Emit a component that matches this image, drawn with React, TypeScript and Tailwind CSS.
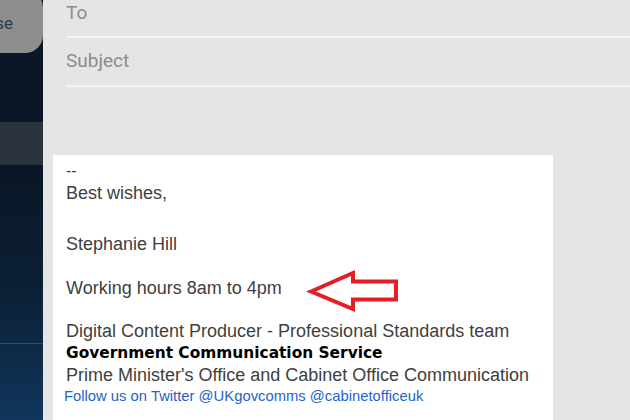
const Arrow = () => (
  <svg width="110" height="60" viewBox="0 0 110 60" className="absolute left-[248px] top-[106px]">
    <polygon
      points="10,30.5 52,12 52,20.5 95,20.5 95,38.5 52,38.5 52,48"
      fill="white"
      stroke="#e31e24"
      strokeWidth="4"
      strokeLinejoin="miter"
    />
  </svg>
)

export default function App() {
  return (
    <div className="w-[630px] h-[420px] flex overflow-hidden font-['Liberation_Sans',Arial,sans-serif]">
      {/* left dark panel */}
      <aside className="w-[43px] shrink-0 flex flex-col overflow-hidden bg-[#0b1726]">
        <div className="h-[63px] -mt-[10px] shrink-0 bg-[#8e8e8e] rounded-r-[18px] flex items-center justify-end pr-[30px] pt-[5px] overflow-hidden">
          <span className="font-['Roboto',sans-serif] text-[17px] text-[#2a3a4c] whitespace-nowrap">Close</span>
        </div>
        <div className="h-[69px] shrink-0 bg-[#0b1726]" />
        <div className="h-[43px] shrink-0 bg-[#2b333d]" />
        <div className="flex-1 bg-gradient-to-b from-[#0a1625] via-[#0c2036] to-[#10365c] flex flex-col">
          <div className="h-[178px] shrink-0" />
          <div className="h-px bg-[#2c4c6c]" />
        </div>
      </aside>

      {/* compose area */}
      <main className="flex-1 bg-[#e5e5e5] flex flex-col">
        <div className="pl-[23px] font-['Roboto',sans-serif] text-[19px] text-[#8c8c8c]">
          <div className="h-[36px] flex items-center -mt-[5px] pt-[1px]">To</div>
          <div className="h-[2px] bg-[#f3f3f3] mt-[5px]" />
          <div className="h-[47px] flex items-center">Subject</div>
          <div className="h-[2px] bg-[#f3f3f3]" />
        </div>

        <div className="relative ml-[10px] mt-[68px] w-[500px] flex-1 bg-white pl-[13px] pt-[5px] text-[18px] text-[#404040]">
          <div className="leading-[22px] text-[16px]">--</div>
          <div className="leading-[22px]">Best wishes,</div>
          <div className="leading-[22px] mt-[29px]">Stephanie Hill</div>
          <div className="leading-[22px] mt-[22px]">Working hours 8am to 4pm</div>
          <div className="leading-[22px] mt-[21px]">Digital Content Producer - Professional Standards team</div>
          <div className="leading-[22px] font-['DejaVu_Sans',Verdana,sans-serif] font-bold text-[15.4px] text-black">Government Communication Service</div>
          <div className="leading-[22px]">Prime Minister's Office and Cabinet Office Communication</div>
          <div className="leading-[20px] -ml-[2px] text-[14.8px] text-[#1f63c8]">Follow us on Twitter @UKgovcomms @cabinetofficeuk</div>
          <Arrow />
        </div>
      </main>
    </div>
  )
}
